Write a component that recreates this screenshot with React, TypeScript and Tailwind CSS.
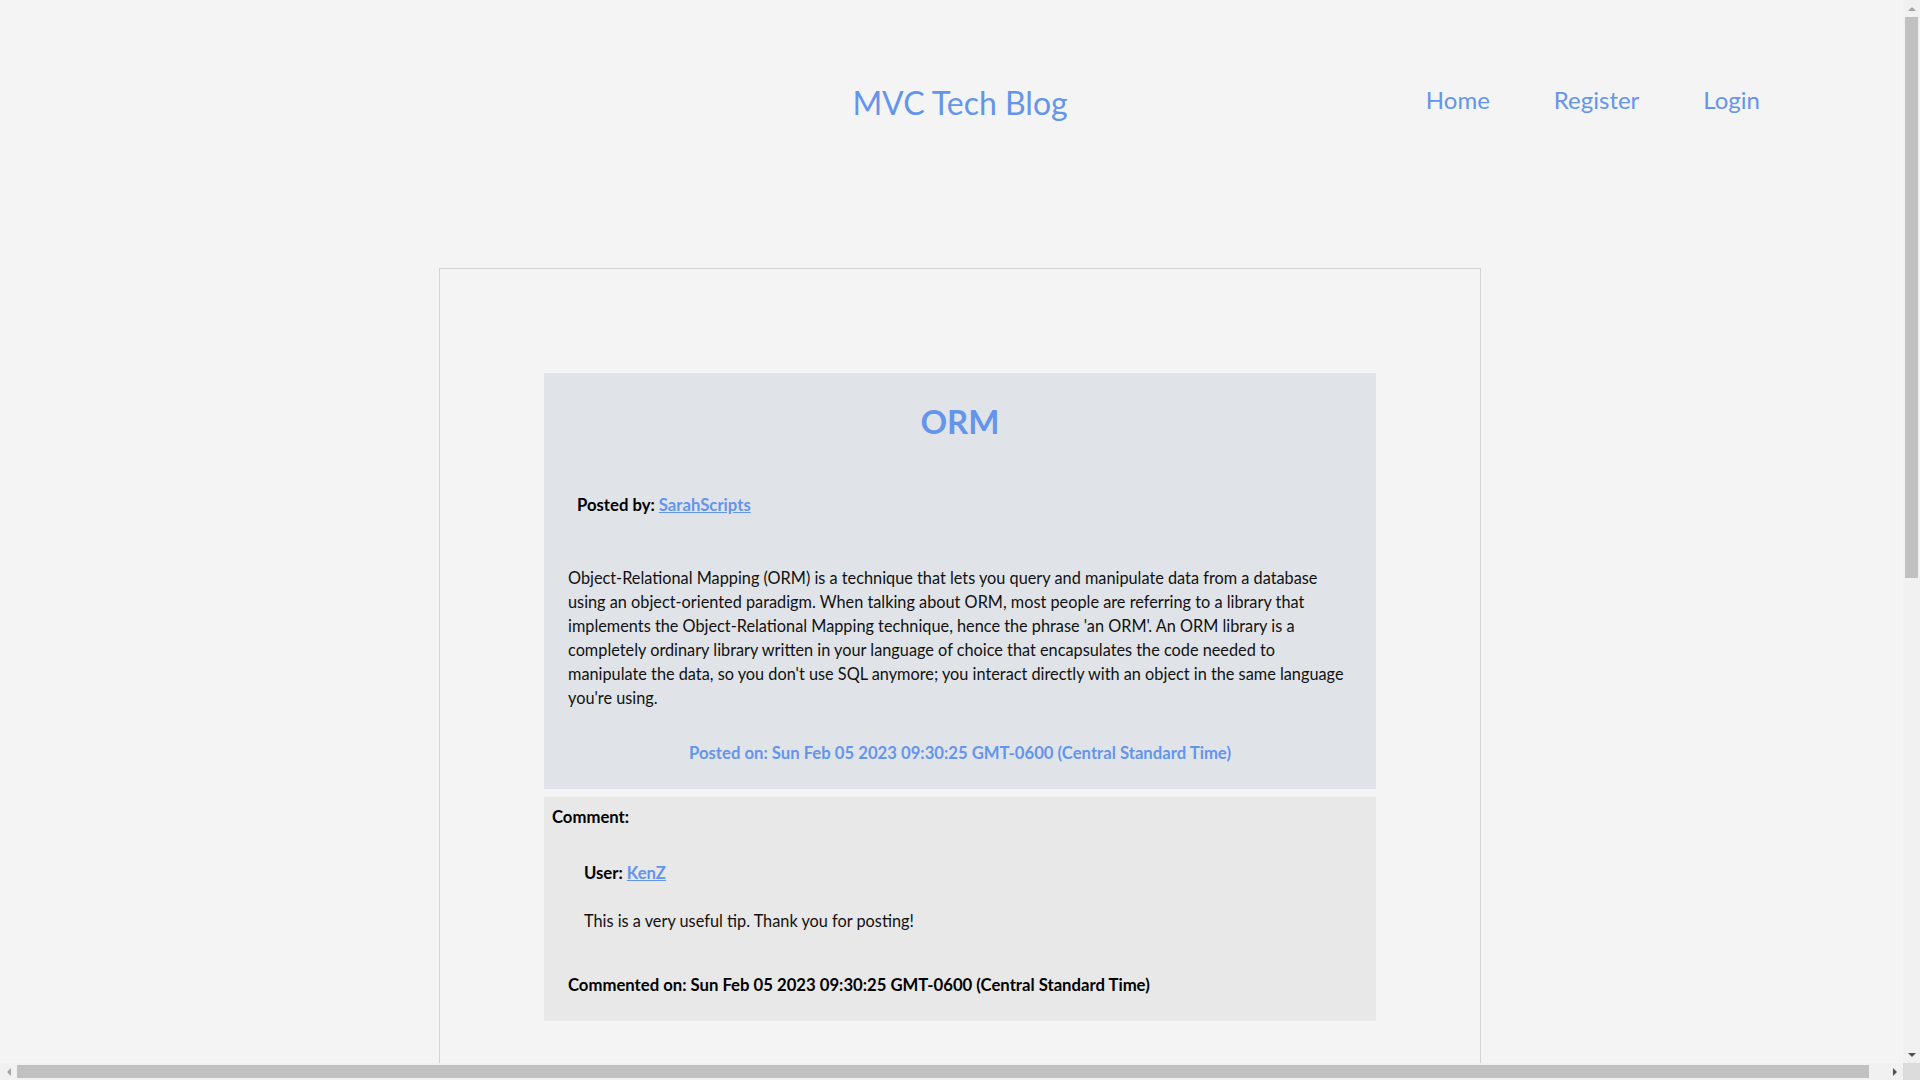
const blue = 'text-[#6495ed]';

function Header() {
  return (
    <header className="grid grid-cols-[1fr_auto_1fr] items-start pt-[84px]">
      <div />
      <h1 className={`text-[32px] leading-[38px] font-normal ${blue}`}>MVC Tech Blog</h1>
      <nav className="flex justify-end gap-[64px] pr-[160px] pt-[1px]">
        <a href="#" className={`text-[24px] leading-[29px] ${blue}`}>Home</a>
        <a href="#" className={`text-[24px] leading-[29px] ${blue}`}>Register</a>
        <a href="#" className={`text-[24px] leading-[29px] ${blue}`}>Login</a>
      </nav>
    </header>
  );
}

function Post() {
  return (
    <article className="bg-[#e0e4e8] px-[24px] pt-[29px] pb-[24px]">
      <h2 className={`text-center text-[33px] leading-[38px] font-bold ${blue}`}>ORM</h2>
      <p className="mt-[53px] pl-[9px] text-[16.7px] leading-[24px] font-bold text-black">
        Posted by: <a href="#" className={`underline ${blue}`}>SarahScripts</a>
      </p>
      <p className="mt-[49px] text-[16.3px] leading-[24px] text-[#111]">
        Object-Relational Mapping (ORM) is a technique that lets you query and manipulate data from a database using an
        object-oriented paradigm. When talking about ORM, most people are referring to a library that implements the
        Object-Relational Mapping technique, hence the phrase 'an ORM'. An ORM library is a completely ordinary library
        written in your language of choice that encapsulates the code needed to manipulate the data, so you don't use SQL
        anymore; you interact directly with an object in the same language you're using.
      </p>
      <p className={`mt-[31px] text-center text-[16.7px] leading-[24px] font-bold ${blue}`}>
        Posted on: Sun Feb 05 2023 09:30:25 GMT-0600 (Central Standard Time)
      </p>
    </article>
  );
}

function Comment() {
  return (
    <section className="mt-[8px] bg-[#e8e8e8] px-[8px] pt-[8px] pb-[24px] text-[16.7px] leading-[24px] text-black">
      <h3 className="font-bold">Comment:</h3>
      <div className="pl-[32px]">
        <p className="mt-[32px] font-bold">
          User: <a href="#" className={`underline ${blue}`}>KenZ</a>
        </p>
        <p className="mt-[24px] text-[16.3px] text-[#111]">This is a very useful tip. Thank you for posting!</p>
      </div>
      <p className="mt-[40px] pl-[16px] font-bold">
        Commented on: Sun Feb 05 2023 09:30:25 GMT-0600 (Central Standard Time)
      </p>
    </section>
  );
}

// the reference shows the classic browser scrollbars; drawn on top
function Scrollbars() {
  return (
    <div aria-hidden="true">
      <div className="fixed top-0 right-0 flex h-[1063px] w-[17px] flex-col bg-[#f1f1f1]">
        <div className="flex h-[17px] items-center justify-center">
          <span className="h-0 w-0 border-x-[4px] border-b-[4px] border-x-transparent border-b-[#a3a3a3]" />
        </div>
        <div className="flex-1 px-[2px]">
          <div className="h-[561px] bg-[#c1c1c1]" />
        </div>
        <div className="flex h-[17px] items-center justify-center">
          <span className="h-0 w-0 border-x-[4px] border-t-[4px] border-x-transparent border-t-[#505050]" />
        </div>
      </div>
      <div className="fixed bottom-0 left-0 flex h-[17px] w-[1903px] bg-[#f1f1f1]">
        <div className="flex w-[17px] items-center justify-center">
          <span className="h-0 w-0 border-y-[4px] border-r-[4px] border-y-transparent border-r-[#a3a3a3]" />
        </div>
        <div className="flex-1 py-[2px]">
          <div className="h-full w-[1852px] bg-[#c1c1c1]" />
        </div>
        <div className="flex w-[17px] items-center justify-center">
          <span className="h-0 w-0 border-y-[4px] border-l-[4px] border-y-transparent border-l-[#505050]" />
        </div>
      </div>
      <div className="fixed right-0 bottom-0 h-[17px] w-[17px] bg-[#dcdcdc]" />
    </div>
  );
}

export default function App() {
  return (
    <div className="w-screen min-h-[1950px] bg-[#f4f4f4] pb-[40px] font-['Lato',sans-serif]">
      <Header />
      <main className="mx-auto mt-[146px] w-[1042px] min-h-[1642px] border border-[#d3d3d3] pt-[104px]">
        <div className="mx-auto w-[832px]">
          <Post />
          <Comment />
        </div>
      </main>
      <Scrollbars />
    </div>
  );
}
